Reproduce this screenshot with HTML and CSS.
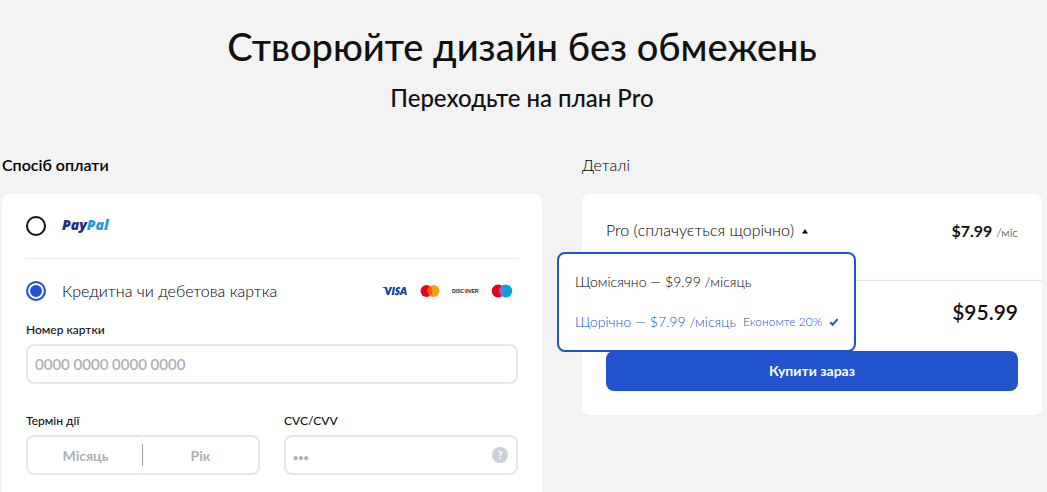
FILE: index.html
```html
<!DOCTYPE html>
<html lang="uk">
<head>
<meta charset="utf-8">
<meta name="viewport" content="width=device-width, initial-scale=1">
<title>План Pro</title>
<link rel="stylesheet" href="styles.css">
</head>
<body>
<main class="page">
  <header class="hero">
    <h1 class="hero-title">Створюйте дизайн без обмежень</h1>
    <p class="hero-subtitle">Переходьте на план Pro</p>
  </header>
  <div class="columns">
    <section class="payment">
      <h2 class="section-title section-title-strong">Спосіб оплати</h2>
      <form class="card payment-card">
        <div class="method method-paypal">
          <input class="radio" type="radio" name="method" id="paypal" aria-label="PayPal">
          <label class="method-label" for="paypal">
            <svg class="paypal" width="56" height="24" viewBox="0 0 56 24" aria-hidden="true"><text class="paypal-text" x="0" y="16"><tspan fill="#1f2f7c">Pay</tspan><tspan fill="#219bd7">Pal</tspan></text></svg>
          </label>
        </div>
        <div class="method method-card">
          <input class="radio" type="radio" name="method" id="card" checked>
          <label class="method-label" for="card">Кредитна чи дебетова картка</label>
          <div class="brands">
            <svg width="27" height="14" viewBox="0 0 27 14" role="img" aria-label="Visa"><g fill="#17479e"><path d="M1 3h4.200q.8 0 1 .8L7.100 8 9 3h2.300L8 11H5.900L4.200 4.800Q4 4.200 3.300 3.900 2.300 3.500 1 3.300z"/><path d="M12 3h2.100l-1.300 8h-2.100z"/><path d="M19.300 3.300L19 5c-1-.5-2.500-.5-2.500.2 0 .8 2.500 1 2.300 3.200-.3 2.400-2.900 3.300-5.200 2.400l.3-1.700c1.300.6 2.700.5 2.800-.3.100-.8-2.400-.9-2.200-3.200.3-2.300 2.800-3.100 4.800-2.300z"/><path fill-rule="evenodd" d="M24.500 3L26 11h-1.900l-.3-1.400h-2.600l-.6 1.400h-2.200l3.200-7.300q.3-.7 1-.7zM23.500 8l-.5-2.600L21.900 8z"/></g></svg>
            <svg width="20" height="14" viewBox="0 0 20 14" role="img" aria-label="Mastercard"><circle cx="6.500" cy="7" r="6" fill="#eb001b"/><circle cx="13.500" cy="7" r="6" fill="#f79e1b"/><path d="M10 2.100a6 6 0 0 1 0 9.800 6 6 0 0 1 0-9.800z" fill="#ff5f00"/></svg>
            <svg width="27" height="14" viewBox="0 0 27 14" role="img" aria-label="Discover"><text class="discover-text" x="0" y="9">DISC</text><circle cx="14.700" cy="7" r="2.200" fill="#f26e21"/><text class="discover-text" x="16.200" y="9">VER</text></svg>
            <svg width="22" height="14" viewBox="0 0 22 14" role="img" aria-label="Maestro"><circle cx="7.200" cy="7" r="6.500" fill="#eb001b"/><circle cx="14.800" cy="7" r="6.500" fill="#00a2e5"/><path d="M11 1.700a6.500 6.500 0 0 1 0 10.600 6.500 6.500 0 0 1 0-10.600z" fill="#7375cf"/></svg>
          </div>
        </div>
        <div class="field">
          <label class="field-label" for="number">Номер картки</label>
          <input class="input number-input" type="text" id="number" placeholder="0000 0000 0000 0000">
        </div>
        <div class="field-row">
          <div class="field">
            <label class="field-label" for="month">Термін дії</label>
            <div class="expiry">
              <input class="input expiry-input expiry-month" type="text" id="month" placeholder="Місяць">
              <input class="input expiry-input expiry-year" type="text" id="year" placeholder="Рік" aria-label="Рік">
            </div>
          </div>
          <div class="field">
            <label class="field-label" for="cvc">CVC/CVV</label>
            <div class="cvc">
              <input class="input cvc-input" type="text" id="cvc" placeholder="•••">
              <button class="help" type="button">?</button>
            </div>
          </div>
        </div>
      </form>
    </section>
    <section class="details">
      <h2 class="section-title">Деталі</h2>
      <div class="card details-card">
        <div class="plan">
          <div class="plan-picker">
            <button class="plan-toggle" type="button" aria-haspopup="listbox" aria-expanded="true">Pro (сплачується щорічно)<svg class="caret" width="6" height="8" viewBox="0 0 6 8" aria-hidden="true"><path d="M3 3l3 4.500H0z"/></svg></button>
            <div class="menu" role="listbox" aria-label="План">
              <button class="option" type="button" role="option" aria-selected="false">Щомісячно — $9.99 /місяць</button>
              <button class="option option-selected" type="button" role="option" aria-selected="true">Щорічно — $7.99 /місяць<span class="saving">Економте 20%</span><svg width="10" height="8" viewBox="0 0 10 8" aria-hidden="true"><path d="M1.200 4.200l2.500 2.500L8.600 1.200" fill="none" stroke="currentColor" stroke-width="2"/></svg></button>
            </div>
          </div>
          <p class="price"><strong>$7.99</strong> <span class="period">/міс</span></p>
        </div>
        <div class="checkout">
          <p class="total">$95.99</p>
          <button class="buy" type="button">Купити зараз</button>
        </div>
      </div>
    </section>
  </div>
</main>
</body>
</html>
```
FILE: styles.css
```css
* { box-sizing: border-box; }
body {
  margin: 0;
  background: #f3f3f3;
  color: #111;
  font-family: Lato, "Noto Sans", sans-serif;
  font-size: 16px;
  line-height: 24px;
}
h1, h2, p { margin: 0; font-weight: 400; }
input, button { font: inherit; color: inherit; margin: 0; }
button { border: 0; padding: 0; background: none; cursor: pointer; }
svg { display: block; flex: none; }
.page { padding: 22px 5px 0 2px; }
.hero { text-align: center; }
.hero-title { font-size: 38px; line-height: 48px; font-weight: 500; }
.hero-subtitle { margin-top: 12px; font-size: 24px; line-height: 32px; font-weight: 500; }
.columns {
  display: grid;
  grid-template-columns: 27fr 23fr;
  gap: 40px;
  align-items: start;
  margin-top: 39px;
}
.section-title { font-size: 16px; line-height: 24px; font-weight: 300; color: #000; }
.section-title-strong { font-weight: 600; }
.card { margin-top: 17px; background: #fff; border-radius: 8px; }

.payment-card { padding: 0 24px 40px; }
.method { display: flex; align-items: center; gap: 16px; height: 64px; }
.method-paypal { height: 65px; border-bottom: 1px solid #f3e9e0; }
.method-card { height: 63px; }
.radio {
  appearance: none;
  flex: none;
  width: 20px;
  height: 20px;
  border: 2px solid #111;
  border-radius: 50%;
}
.radio:checked {
  border-color: #2053cc;
  background: #2053cc;
  box-shadow: inset 0 0 0 2px #fff;
}
.method-label { font-size: 16px; font-weight: 300; color: #000; }
.paypal-text { font: italic 800 14px "Open Sans", sans-serif; }
.discover-text { font: 700 5px "Liberation Sans", sans-serif; fill: #222; }
.brands { display: flex; align-items: center; gap: 12px; margin-left: auto; padding-right: 5px; }
.field-label { display: block; font-size: 12px; line-height: 16px; margin-bottom: 6px; font-weight: 500; }
.input {
  display: block;
  width: 100%;
  height: 40px;
  padding: 0 7px;
  border: 2px solid #e6e6e6;
  border-radius: 8px;
  background: #fff;
  font-size: 14px;
  font-weight: 700;
}
.input::placeholder { color: #aeb0b8; opacity: 1; }
.number-input { font-size: 15px; font-weight: 600; }
.field-row { display: grid; grid-template-columns: 1fr 1fr; gap: 24px; margin-top: 29px; }
.expiry { position: relative; display: grid; grid-template-columns: 1fr 1fr; }
.expiry::after {
  content: "";
  position: absolute;
  top: 9px;
  left: calc(50% - 1px);
  width: 1px;
  height: 22px;
  background: #a0a2ac;
}
.expiry-input { text-align: center; }
.expiry-month { border-right: 0; border-radius: 8px 2px 2px 8px; }
.expiry-year { border-left: 0; border-radius: 2px 8px 8px 2px; }
.cvc { position: relative; }
.cvc-input { padding-right: 32px; }
.cvc-input::placeholder { font-size: 9px; }
.help {
  position: absolute;
  right: 10px;
  top: 12px;
  width: 16px;
  height: 16px;
  border-radius: 50%;
  background: #cbcfda;
  color: #fff;
  font-size: 12px;
  line-height: 16px;
  font-weight: 700;
}

.plan {
  display: flex;
  justify-content: space-between;
  align-items: flex-start;
  height: 87px;
  padding: 24px 24px 0;
  border-bottom: 1px solid #eee1d8;
}
.plan-picker { position: relative; }
.plan-toggle { display: flex; align-items: center; gap: 8px; font-weight: 300; color: #000; }
.menu {
  position: absolute;
  z-index: 1;
  top: 34px;
  left: -49px;
  padding: 8px 16px;
  width: 299px;
  border: 2px solid #2053cc;
  border-radius: 8px;
  background: #fff;
}
.option {
  display: flex;
  align-items: center;
  gap: 7px;
  width: 100%;
  height: 40px;
  font-size: 14px;
  font-weight: 300;
  color: #000;
  white-space: nowrap;
}
.option-selected { color: #2053cc; }
.saving { font-size: 12px; }
.price { padding-top: 1px; }
.price strong { font-weight: 700; }
.period { font-size: 12px; font-weight: 300; }
.checkout { padding: 15px 24px 24px; }
.total { font-size: 21px; line-height: 32px; font-weight: 600; text-align: right; }
.buy {
  display: block;
  width: 100%;
  height: 40px;
  margin-top: 23px;
  border-radius: 8px;
  background: #2053cc;
  color: #fff;
  font-size: 14px;
  font-weight: 700;
}
```
